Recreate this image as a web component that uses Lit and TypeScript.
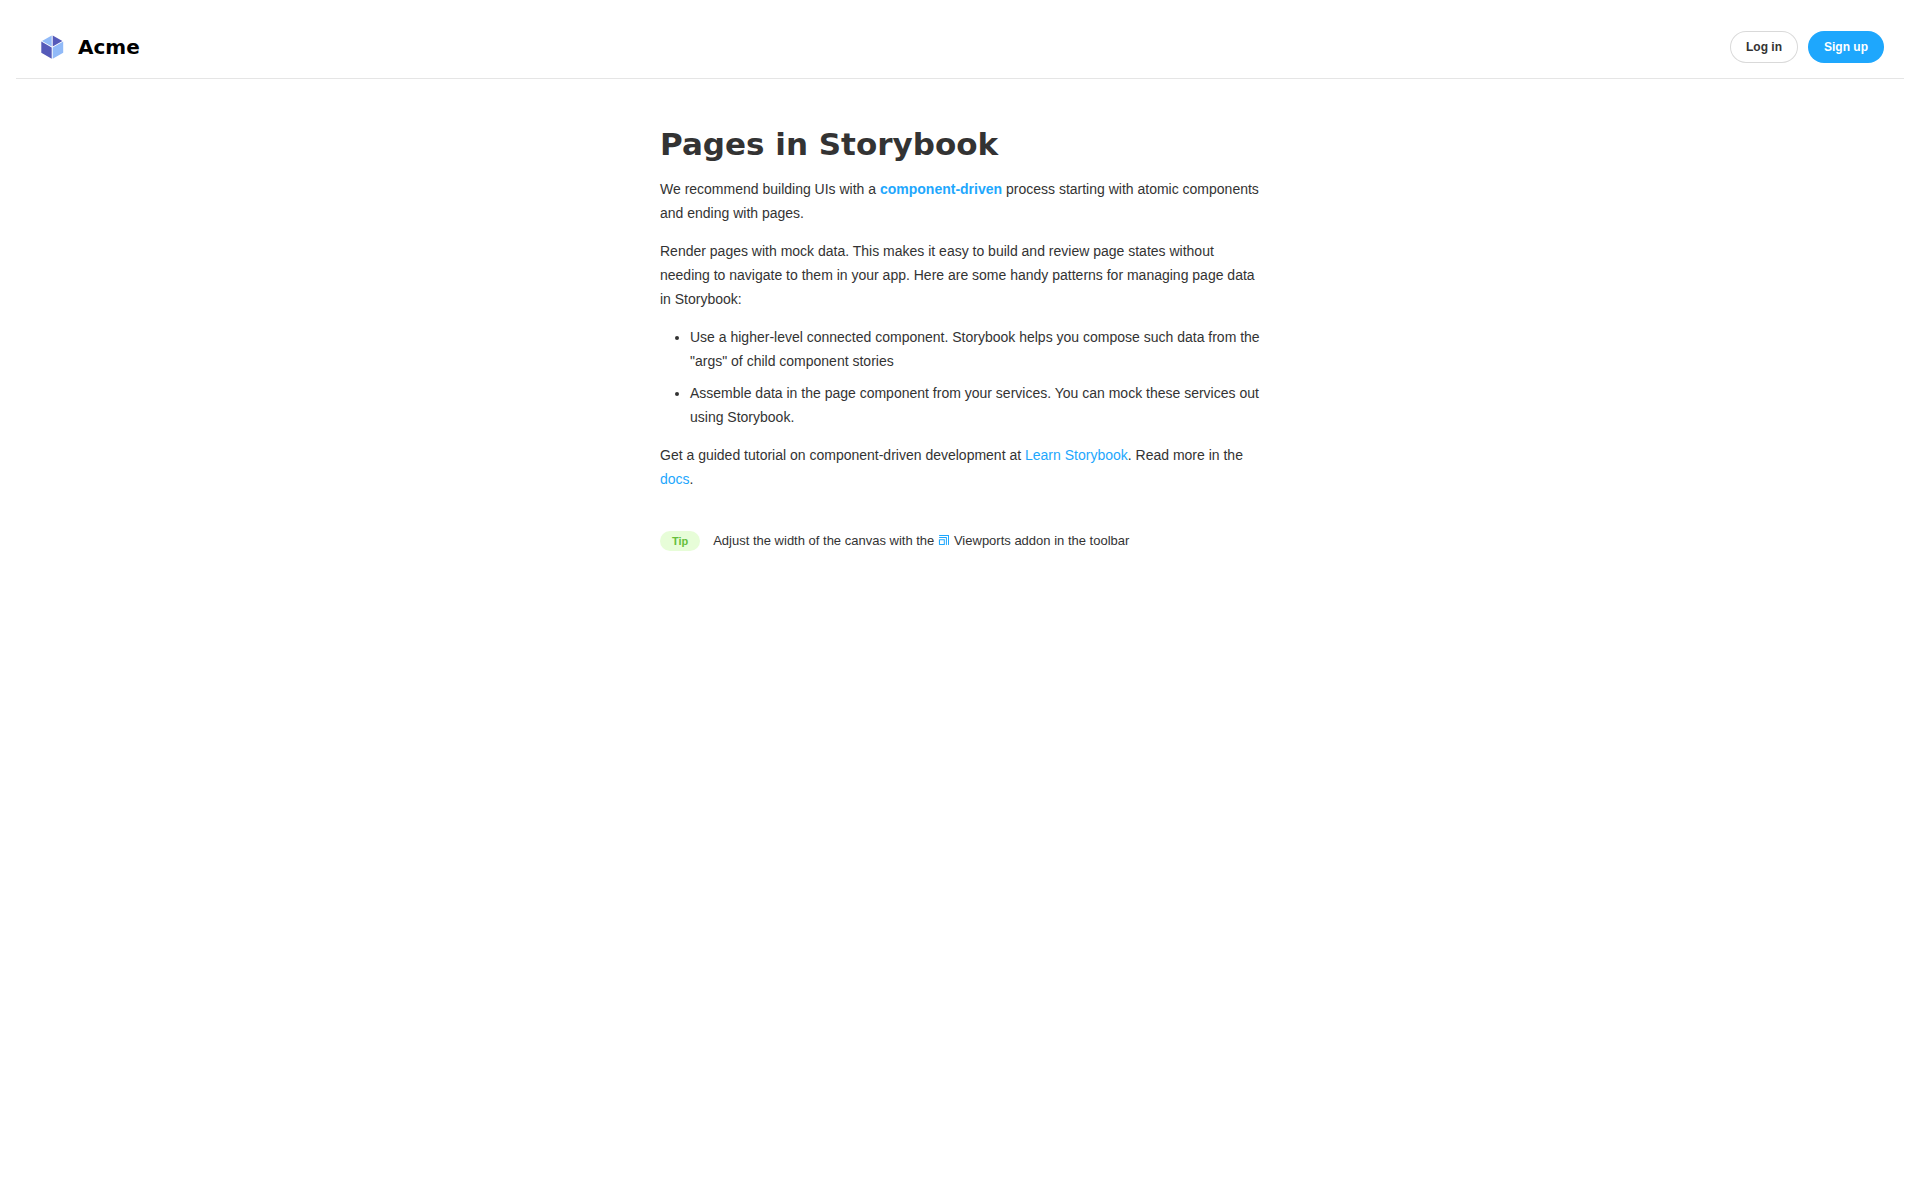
import { LitElement, html, css } from "lit";
import { customElement } from "lit/decorators.js";

@customElement("acme-header")
class AcmeHeader extends LitElement {
  static styles = css`
    :host {
      display: block;
    }
    .bar {
      display: flex;
      align-items: center;
      justify-content: space-between;
      padding: 15px 20px;
      border-bottom: 1px solid rgba(0, 0, 0, 0.1);
    }
    .brand {
      display: flex;
      align-items: center;
      gap: 10px;
    }
    .logo {
      display: block;
      width: 32px;
      height: 32px;
    }
    .name {
      margin: 0;
      color: #000;
      font-family: "DejaVu Sans", "Liberation Sans", sans-serif;
      font-size: 20px;
      font-weight: 900;
      line-height: 32px;
    }
    .actions {
      display: flex;
      gap: 10px;
    }
    .button {
      padding: 10px 16px;
      border: 0;
      border-radius: 48px;
      font-family: inherit;
      font-size: 12px;
      font-weight: 700;
      line-height: 12px;
      cursor: pointer;
    }
    .secondary {
      color: #333;
      background: transparent;
      box-shadow: rgba(0, 0, 0, 0.15) 0 0 0 1px inset;
    }
    .primary {
      color: #fff;
      background: #1ea7fd;
    }
  `;

  render() {
    return html`
      <header class="bar">
        <div class="brand">
          <svg class="logo" viewBox="0 0 32 32" aria-hidden="true">
            <path
              fill="#555AB9"
              d="M5.3 10.6l10.4 6v11.1l-10.4-6v-11zm11.4-6.2l9.7 5.5-9.7 5.6V4.4z"
            />
            <path
              fill="#91BAF8"
              d="M27.2 10.6v11.2l-10.5 6V16.5l10.5-6zM15.7 4.4v11L6 10l9.7-5.5z"
            />
          </svg>
          <h1 class="name">Acme</h1>
        </div>
        <div class="actions">
          <button class="button secondary" type="button">Log in</button>
          <button class="button primary" type="button">Sign up</button>
        </div>
      </header>
    `;
  }
}

@customElement("app-root")
class AppRoot extends LitElement {
  static styles = css`
    :host {
      display: block;
      padding: 16px;
      background: #fff;
      color: #333;
      font-family: "Liberation Sans", Arial, sans-serif;
    }
    .content {
      max-width: 600px;
      margin: 0 auto;
      padding: 48px 20px;
      font-size: 14px;
      line-height: 24px;
    }
    .title {
      margin: 0 0 16px;
      font-family: "DejaVu Sans", "Liberation Sans", sans-serif;
      font-size: 31px;
      font-weight: 900;
      line-height: 34px;
    }
    .text {
      margin: 14px 0;
    }
    .list {
      margin: 14px 0;
      padding-left: 30px;
    }
    .item {
      margin-bottom: 8px;
    }
    .link {
      color: #1ea7fd;
      text-decoration: none;
    }
    .tip-row {
      margin: 40px 0;
      font-size: 13px;
      line-height: 20px;
    }
    .tip {
      display: inline-block;
      margin-right: 10px;
      padding: 4px 12px;
      border-radius: 12px;
      color: #66bf3c;
      background: #e7fdd8;
      font-size: 11px;
      font-weight: 700;
      line-height: 12px;
      vertical-align: top;
    }
    .viewport-icon {
      display: inline-block;
      width: 12px;
      height: 12px;
      margin: 3px 4px 0 0;
      vertical-align: top;
      fill: #1ea7fd;
    }
  `;

  render() {
    return html`
      <acme-header></acme-header>
      <main class="content">
        <h2 class="title">Pages in Storybook</h2>
        <p class="text">
          We recommend building UIs with a
          <a class="link" href="#component-driven"><strong>component-driven</strong></a>
          process starting with atomic components and ending with pages.
        </p>
        <p class="text">
          Render pages with mock data. This makes it easy to build and review page states without
          needing to navigate to them in your app. Here are some handy patterns for managing page
          data in Storybook:
        </p>
        <ul class="list">
          <li class="item">
            Use a higher-level connected component. Storybook helps you compose such data from the
            "args" of child component stories
          </li>
          <li class="item">
            Assemble data in the page component from your services. You can mock these services out
            using Storybook.
          </li>
        </ul>
        <p class="text">
          Get a guided tutorial on component-driven development at
          <a class="link" href="#tutorials">Learn Storybook</a>. Read more in the
          <a class="link" href="#docs">docs</a>.
        </p>
        <div class="tip-row">
          <span class="tip">Tip</span>
          Adjust the width of the canvas with the
          <svg class="viewport-icon" viewBox="0 0 12 12" aria-hidden="true">
            <path
              fill-rule="evenodd"
              d="M1.5 5.2h4.8c.3 0 .5.2.5.4v5.1c-.1.2-.3.3-.4.3H1.4a.5.5 0 01-.5-.4V5.7c0-.3.2-.5.5-.5zm0-2.1h6.9c.3 0 .5.2.5.4v7a.5.5 0 01-1 0V4H1.5a.5.5 0 010-1zm0-2.1h9c.3 0 .5.2.5.4v9.1a.5.5 0 01-1 0V2H1.5a.5.5 0 010-1zm4.3 5.2H2V10h3.8V6.2z"
            /></svg>Viewports addon in the toolbar
        </div>
      </main>
    `;
  }
}
